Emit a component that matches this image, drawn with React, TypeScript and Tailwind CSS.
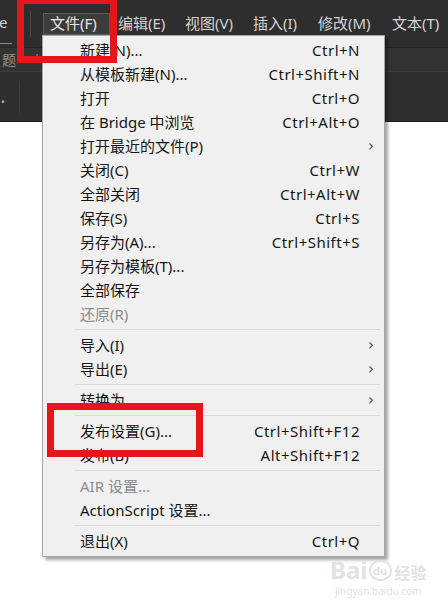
import React from "react";

type Item =
  | { sep: true }
  | { label: string; shortcut?: string; sub?: boolean; disabled?: boolean; sep?: false };

const items: Item[] = [
  { label: "新建(N)...", shortcut: "Ctrl+N" },
  { label: "从模板新建(N)...", shortcut: "Ctrl+Shift+N" },
  { label: "打开", shortcut: "Ctrl+O" },
  { label: "在 Bridge 中浏览", shortcut: "Ctrl+Alt+O" },
  { label: "打开最近的文件(P)", sub: true },
  { label: "关闭(C)", shortcut: "Ctrl+W" },
  { label: "全部关闭", shortcut: "Ctrl+Alt+W" },
  { label: "保存(S)", shortcut: "Ctrl+S" },
  { label: "另存为(A)...", shortcut: "Ctrl+Shift+S" },
  { label: "另存为模板(T)..." },
  { label: "全部保存" },
  { label: "还原(R)", disabled: true },
  { sep: true },
  { label: "导入(I)", sub: true },
  { label: "导出(E)", sub: true },
  { sep: true },
  { label: "转换为", sub: true },
  { sep: true },
  { label: "发布设置(G)...", shortcut: "Ctrl+Shift+F12" },
  { label: "发布(B)", shortcut: "Alt+Shift+F12" },
  { sep: true },
  { label: "AIR 设置...", disabled: true },
  { label: "ActionScript 设置..." },
  { sep: true },
  { label: "退出(X)", shortcut: "Ctrl+Q" },
];

const menus = [
  { label: "编辑(E)", w: "w-[67px]" },
  { label: "视图(V)", w: "w-[68px]" },
  { label: "插入(I)", w: "w-[65px]" },
  { label: "修改(M)", w: "w-[74px]" },
  { label: "文本(T)", w: "w-[56px]" },
];

const MenuRow = ({ item }: { item: Item }) => {
  if (item.sep) {
    return <div className="ml-[32px] mr-[4px] my-[3px] h-px bg-[#d9d9d9]" />;
  }
  return (
    <div
      className={`flex items-center h-[24px] pl-[37px] pr-[24px] ${
        item.disabled ? "text-[#8c8c8c]" : "text-[#161616]"
      }`}
    >
      <span className="flex-1 whitespace-nowrap">{item.label}</span>
      {item.shortcut && <span className="whitespace-nowrap tracking-[0.5px]">{item.shortcut}</span>}
      {item.sub && (
        <span className="-mr-[14px] text-[15px] text-[#444]" style={{ fontFamily: "'DejaVu Sans', sans-serif" }}>
          ›
        </span>
      )}
    </div>
  );
};

export default function App() {
  return (
    <div
      className="relative w-[448px] h-[601px] bg-white overflow-hidden"
      style={{ fontFamily: "'Noto Sans', 'Noto Sans CJK SC', sans-serif" }}
    >
      {/* app chrome */}
      <div className="h-[122px] bg-[#2e2e2e] border-b border-[#1b1b1b] flex flex-col">
        <div className="h-[48px] flex items-center border-b border-[#232323] text-[15px] text-[#d4d4d4]">
          <div className="relative h-full w-[30px] flex items-center">
            <span className="-ml-[1px] -mt-[2px]">e</span>
            <div className="absolute left-0 bottom-[3px] w-[12px] h-px bg-[#8a8a8a]" />
          </div>
          <div className="w-px h-[26px] bg-[#474747]" />
          <div className="ml-[12px] w-[67px] h-[22px] pl-[6px] flex items-center bg-[#3c3c3c] border border-[#5c5c5c] text-[#e6e6e6]">
            文件(F)
          </div>
          <div className="flex items-center ml-[8px]">
            {menus.map((m) => (
              <span key={m.label} className={`whitespace-nowrap ${m.w}`}>
                {m.label}
              </span>
            ))}
          </div>
        </div>
        <div className="h-[24px] bg-[#333333] border-b border-[#3b3b3b] flex items-center text-[14px] text-[#8f8f8f]">
          <span className="ml-[2px]">题·</span>
          <span className="ml-[14px] text-[12px] text-[#9a9a9a]">*</span>
        </div>
        <div className="flex-1 flex items-center">
          <span className="ml-[1px] mt-[12px] text-[10px] text-[#bbbbbb]">•</span>
          <div className="ml-[14px] w-px h-[32px] bg-[#3c3c3c]" />
        </div>
      </div>

      {/* dropdown */}
      <div className="absolute left-[42px] top-[35px] w-[343px] bg-[#f0f0f0] border border-[#a6a6a6] pt-[2px] pb-[3px] text-[15px] shadow-[3px_3px_3px_rgba(0,0,0,0.35)]">
        {items.map((it, i) => (
          <MenuRow key={i} item={it} />
        ))}
      </div>

      {/* annotations */}
      <div className="absolute left-[17px] -top-[3px] w-[100px] h-[66px] border-[7px] border-[#e5161a]" />
      <div className="absolute left-[47px] top-[403px] w-[156px] h-[54px] border-[7px] border-[#e5161a]" />

      {/* watermark */}
      <div className="absolute left-[330px] top-[558px] flex flex-col items-center text-[#e2e2e2] leading-none whitespace-nowrap">
        <div className="flex items-end">
          <span className="text-[24px] font-bold">Bai</span>
          <span className="ml-[1px] mb-[1px] w-[23px] h-[21px] rounded-full border-2 border-[#e2e2e2] text-[11px] font-bold flex items-center justify-center">du</span>
          <span className="ml-[3px] mb-[1px] text-[16px] font-bold">经验</span>
        </div>
        <span className="text-[10px] mt-[4px]">jingyan.baidu.com</span>
      </div>
    </div>
  );
}
